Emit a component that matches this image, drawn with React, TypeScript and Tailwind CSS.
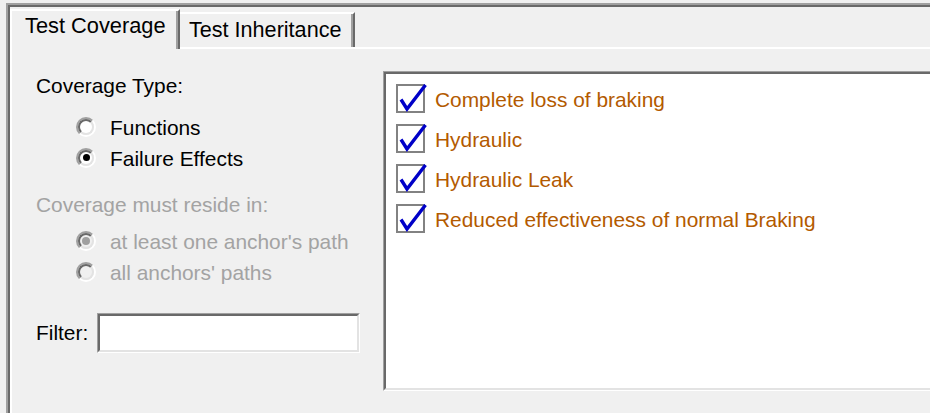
const failureEffects = [
  "Complete loss of braking",
  "Hydraulic",
  "Hydraulic Leak",
  "Reduced effectiveness of normal Braking",
];

function Radio({ checked, disabled }: { checked?: boolean; disabled?: boolean }) {
  return (
    <span className="mb-[2px] flex h-[20px] w-[20px] shrink-0 rounded-full border-2 border-t-[#a0a0a0] border-l-[#a0a0a0] border-b-white border-r-white">
      <span
        className={`flex flex-1 items-center justify-center rounded-full border-2 border-t-[#696969] border-l-[#696969] border-b-[#e3e3e3] border-r-[#e3e3e3] ${
          disabled ? "bg-[#f0f0f0]" : "bg-white"
        }`}
      >
        {checked && (
          <span
            className={
              disabled
                ? "h-[8px] w-[8px] rounded-full bg-[#a0a0a0]"
                : "h-[7px] w-[7px] rounded-full bg-black"
            }
          />
        )}
      </span>
    </span>
  );
}

function RadioRow({ label, checked, disabled }: { label: string; checked?: boolean; disabled?: boolean }) {
  return (
    <div className={`flex h-[31px] items-center gap-[14px] ${disabled ? "text-[#a3a3a3]" : ""}`}>
      <Radio checked={checked} disabled={disabled} />
      <span>{label}</span>
    </div>
  );
}

function CheckIcon() {
  return (
    <svg width="31" height="31" viewBox="0 0 31 31" className="mb-[4px] shrink-0">
      <rect x="1" y="2" width="27" height="27" fill="white" stroke="#828282" strokeWidth="2" />
      <path d="M5 16.5 L11 26 L29.5 2" fill="none" stroke="#0000c8" strokeWidth="3.4" strokeLinejoin="miter" />
    </svg>
  );
}

export default function App() {
  return (
    <div className="flex h-[413px] w-[930px] overflow-hidden bg-[#f0f0f0] pl-[6px] pt-[3px] font-['Liberation_Sans',Arial,sans-serif] text-[20.9px] leading-[24px] text-black">
      <div className="flex flex-1 flex-col border-l-2 border-t-2 border-[#a0a0a0]">
        <div className="flex flex-1 flex-col border-l-2 border-t-2 border-[#696969]">
          {/* tabs */}
          <div className="flex h-[40px] shrink-0 items-end">
            <div className="relative z-10 -mb-[2px] h-[40px] w-[170px] border-l-2 border-t-2 border-r-2 border-white border-r-[#696969] bg-[#f0f0f0]">
              <div className="h-full border-r-2 border-[#a0a0a0] pl-[13px] pt-[3px] text-[21.8px]">Test Coverage</div>
            </div>
            <div className="h-[35px] w-[175px] border-t-2 border-r-2 border-white border-r-[#696969]">
              <div className="h-full border-r-2 border-[#a0a0a0] pl-[9px] pt-[4px] text-[21.6px]">Test Inheritance</div>
            </div>
          </div>

          {/* panel */}
          <div className="flex flex-1 border-l-2 border-t-2 border-white pl-[24px] pt-[22px]">
            <div className="flex w-[347px] shrink-0 flex-col">
              <div className="mt-[3px] h-[24px]">Coverage Type:</div>
              <div className="mt-[14px] flex flex-col pl-[40px]">
                <RadioRow label="Functions" />
                <RadioRow label="Failure Effects" checked />
              </div>
              <div className="mt-[19px] h-[24px] text-[#a3a3a3]">Coverage must reside in:</div>
              <div className="mt-[9px] flex flex-col pl-[40px]">
                <RadioRow label="at least one anchor's path" checked disabled />
                <RadioRow label="all anchors' paths" disabled />
              </div>
              <div className="mt-[25px] flex h-[40px] items-center">
                <span className="w-[61px] shrink-0">Filter:</span>
                <div className="h-[40px] w-[263px] border-l border-t border-b border-r border-[#a0a0a0] border-b-white border-r-white">
                  <input
                    type="text"
                    className="h-full w-full border-l-2 border-t-2 border-b-2 border-r-2 border-[#696969] border-b-[#e3e3e3] border-r-[#e3e3e3] bg-white px-1 outline-none"
                  />
                </div>
              </div>
            </div>

            <div className="h-[320px] w-[570px] shrink-0 border border-[#a0a0a0] border-b-white border-r-white">
              <div className="flex h-full flex-col border-2 border-[#696969] border-b-[#e3e3e3] border-r-[#e3e3e3] bg-white pl-[10px] pt-[6px]">
                {failureEffects.map(item => (
                  <div key={item} className="flex h-[40px] items-center gap-[8px]">
                    <CheckIcon />
                    <span className="text-[#b35a00]">{item}</span>
                  </div>
                ))}
              </div>
            </div>
          </div>
        </div>
      </div>
    </div>
  );
}
